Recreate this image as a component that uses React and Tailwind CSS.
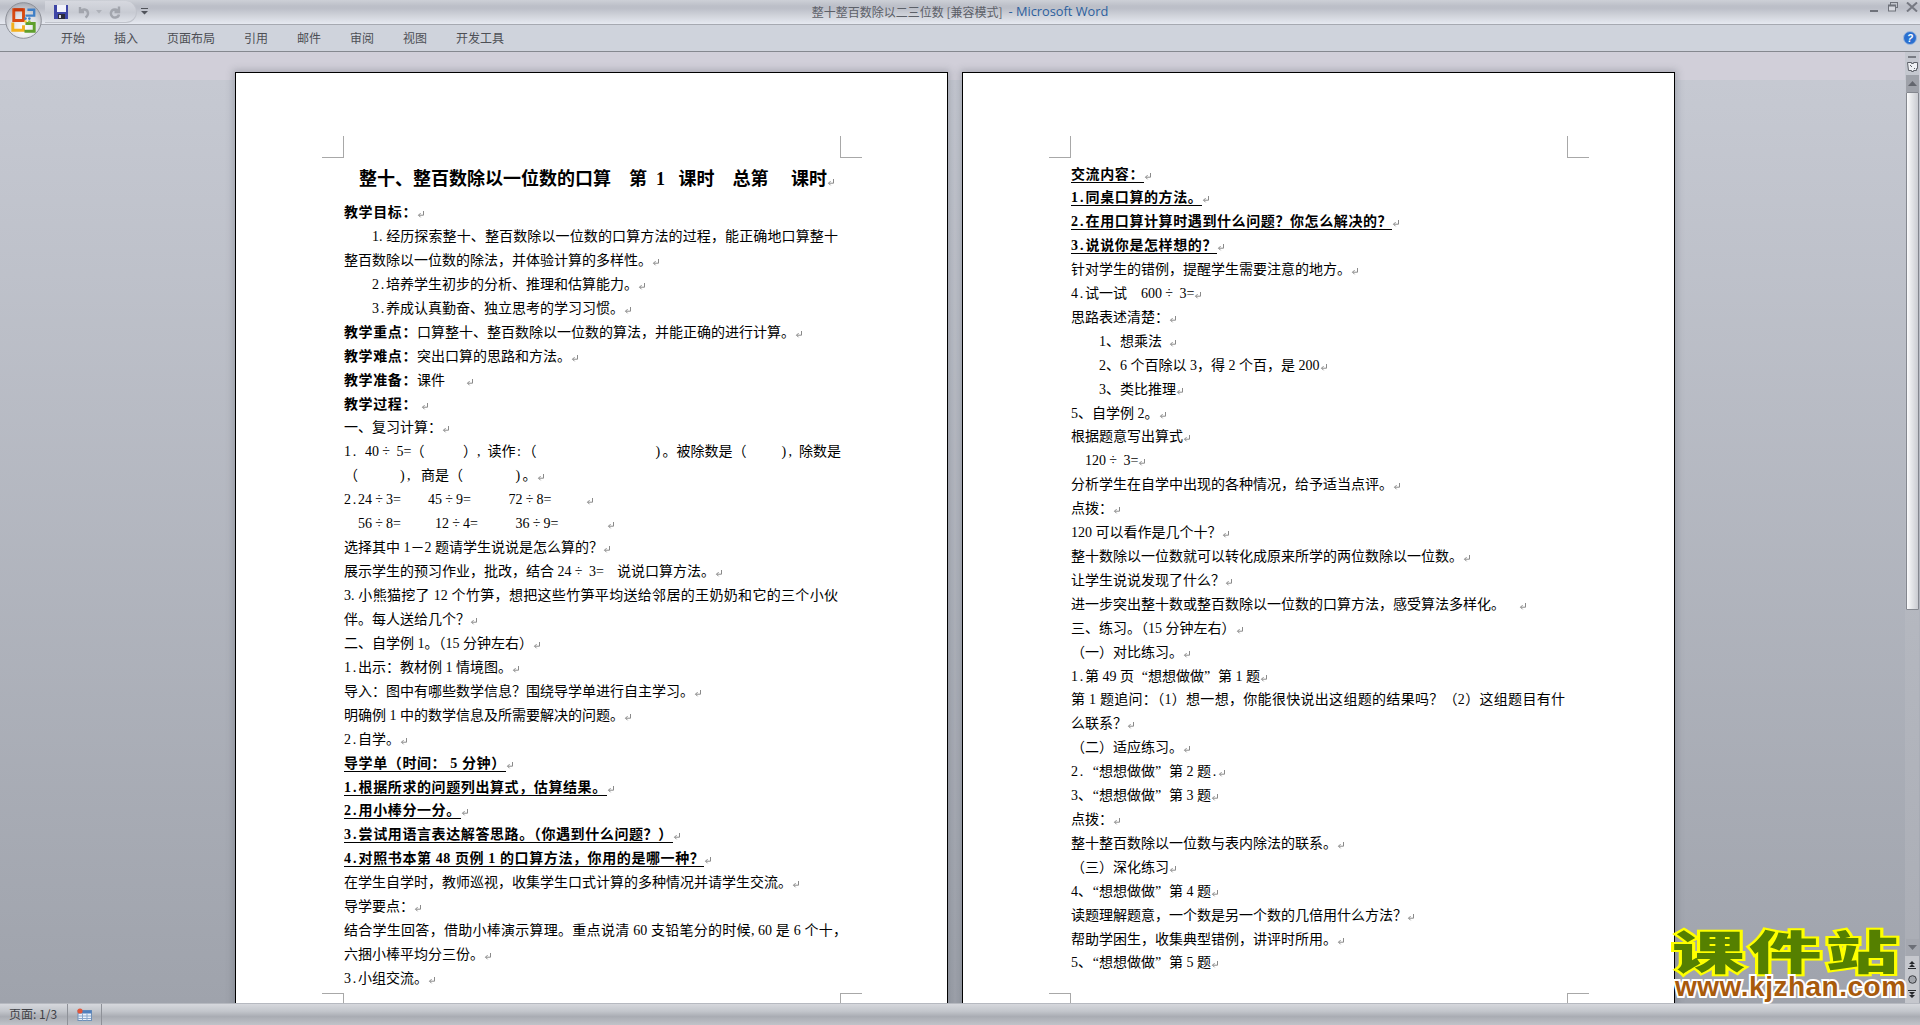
import React from "react";

const WID = {
  ".": "inline-block w-[7px] text-center",
  ",": "inline-block w-[7px] text-left",
  ":": "inline-block w-[7px] text-center",
  "(": "inline-block w-[7px] text-right",
  ")": "inline-block w-[7px] text-left",
  "=": "inline-block w-[7px] text-center",
  "÷": "inline-block w-[14px] text-center",
  "“": "inline-block w-[14px] text-right",
  "”": "inline-block w-[14px] text-left",
  "~": "inline-block w-[7px]",
  "`": "inline-block -ml-[7px]",
};

function T({ s }) {
  return s.split(/([.,:()=÷“”~`])/).map((p, i) =>
    WID[p] ? (
      <span key={i} className={WID[p]}>
        {p === "~" ? "\u00a0" : p === "`" ? "" : p}
      </span>
    ) : (
      p
    )
  );
}

function Mark() {
  return (
    <svg viewBox="0 0 8 8" className="inline-block w-[8px] h-[8px] align-[-1px]">
      <path d="M6.5 1v4.2H1.5M3.6 3.1L1.5 5.2l2.1 2.1" fill="none" stroke="#8a8a8a" strokeWidth="1" />
    </svg>
  );
}

function L({ t, lead, b, u, x = "", tail = "", nomark }) {
  const inner = (
    <>
      {lead && (
        <span className="font-bold tracking-[0.6px]">
          <T s={lead} />
        </span>
      )}
      <T s={t} />
    </>
  );
  return (
    <div className={`whitespace-pre-wrap ${b ? "font-bold tracking-[0.6px]" : ""} ${x}`}>
      {u ? <span className="border-b border-black">{inner}</span> : inner}
      <T s={tail} />
      {!nomark && <Mark />}
    </div>
  );
}

const J = "w-[494px] [text-align-last:justify]";
const J2 = "w-[503px] [text-align-last:justify]";

const page1 = [
  { lead: "教学目标：", t: "" },
  { t: "~~~~1.经历探索整十、整百数除以一位数的口算方法的过程，能正确地口算整十", x: J, nomark: true },
  { t: "整百数除以一位数的除法，并体验计算的多样性。" },
  { t: "~~~~2.培养学生初步的分析、推理和估算能力。" },
  { t: "~~~~3.养成认真勤奋、独立思考的学习习惯。" },
  { lead: "教学重点：", t: "口算整十、整百数除以一位数的算法，并能正确的进行计算。" },
  { lead: "教学难点：", t: "突出口算的思路和方法。" },
  { lead: "教学准备：", t: "课件~~~" },
  { lead: "教学过程：", t: "", tail: " " },
  { t: "一、复习计算：" },
  { t: "1.~40÷ 5=（~~~~~ ）, 读作:（~~~~~~~~~~~~~~~~~)。被除数是（~~~~~), 除数是", nomark: true },
  { t: "（~~~~~~),~商是（~~~~~~~ )。" },
  { t: "2.24÷3=~~~~45÷9=~~~~~ 72÷8=~~~~~" },
  { t: "~~56÷8=~~~~~12÷4=~~~~~ 36÷9=~~~~~~~" },
  { t: "选择其中 1－2 题请学生说说是怎么算的？" },
  { t: "展示学生的预习作业，批改，结合 24÷ 3=~~说说口算方法。" },
  { t: "3.小熊猫挖了 12 个竹笋，想把这些竹笋平均送给邻居的王奶奶和它的三个小伙", x: J, nomark: true },
  { t: "伴。每人送给几个？" },
  { t: "二、自学例 1。（15 分钟左右）" },
  { t: "1.出示：教材例 1 情境图。" },
  { t: "导入：图中有哪些数学信息？围绕导学单进行自主学习。" },
  { t: "明确例 1 中的数学信息及所需要解决的问题。" },
  { t: "2.自学。" },
  { t: "导学单（时间： 5 分钟）", b: 1, u: 1 },
  { t: "1.根据所求的问题列出算式，估算结果。", b: 1, u: 1 },
  { t: "2.用小棒分一分。", b: 1, u: 1 },
  { t: "3.尝试用语言表达解答思路。（你遇到什么问题？）", b: 1, u: 1 },
  { t: "4.对照书本第 48 页例 1 的口算方法，你用的是哪一种？", b: 1, u: 1 },
  { t: "在学生自学时，教师巡视，收集学生口式计算的多种情况并请学生交流。" },
  { t: "导学要点：" },
  { t: "结合学生回答，借助小棒演示算理。重点说清 60 支铅笔分的时候,60 是 6 个十，", x: J2, nomark: true },
  { t: "六捆小棒平均分三份。" },
  { t: "3.小组交流。" },
];

const page2 = [
  { t: "交流内容：", b: 1, u: 1 },
  { t: "1.同桌口算的方法。", b: 1, u: 1 },
  { t: "2.在用口算计算时遇到什么问题？你怎么解决的？", b: 1, u: 1 },
  { t: "3.说说你是怎样想的？", b: 1, u: 1 },
  { t: "针对学生的错例，提醒学生需要注意的地方。" },
  { t: "4.试一试~~600÷ 3=" },
  { t: "思路表述清楚：" },
  { t: "~~~~1、想乘法~" },
  { t: "~~~~2、6 个百除以 3，得 2 个百，是 200" },
  { t: "~~~~3、类比推理" },
  { t: "5、自学例 2。" },
  { t: "根据题意写出算式" },
  { t: "~~120÷ 3=" },
  { t: "分析学生在自学中出现的各种情况，给予适当点评。" },
  { t: "点拨：" },
  { t: "120 可以看作是几个十？" },
  { t: "整十数除以一位数就可以转化成原来所学的两位数除以一位数。" },
  { t: "让学生说说发现了什么？" },
  { t: "进一步突出整十数或整百数除以一位数的口算方法，感受算法多样化。~~" },
  { t: "三、练习。（15 分钟左右）" },
  { t: "（一）对比练习。" },
  { t: "1.第 49 页“想想做做”第 1 题" },
  { t: "第 1 题追问：（1）想一想，你能很快说出这组题的结果吗？（2）这组题目有什", x: J, nomark: true },
  { t: "么联系？" },
  { t: "（二）适应练习。" },
  { t: "2.“想想做做”第 2 题." },
  { t: "3、`“想想做做”第 3 题" },
  { t: "点拨：" },
  { t: "整十整百数除以一位数与表内除法的联系。" },
  { t: "（三）深化练习" },
  { t: "4、`“想想做做”第 4 题" },
  { t: "读题理解题意，一个数是另一个数的几倍用什么方法？" },
  { t: "帮助学困生，收集典型错例，讲评时所用。" },
  { t: "5、`“想想做做”第 5 题" },
];

function CropMarks() {
  return (
    <>
      <div className="absolute left-[86px] top-[63px] w-[22px] h-[22px] border-r border-b border-[#a8a8a8]" />
      <div className="absolute left-[604px] top-[63px] w-[22px] h-[22px] border-l border-b border-[#a8a8a8]" />
      <div className="absolute left-[86px] top-[920px] w-[22px] h-[22px] border-r border-t border-[#a8a8a8]" />
      <div className="absolute left-[604px] top-[920px] w-[22px] h-[22px] border-l border-t border-[#a8a8a8]" />
    </>
  );
}

function OfficeButton() {
  return (
    <svg viewBox="0 0 38 38" className="absolute left-[5px] top-[2px] w-[37px] h-[37px]">
      <defs>
        <radialGradient id="orb" cx="0.5" cy="0.72" r="0.7">
          <stop offset="0" stopColor="#ffffff" />
          <stop offset="0.55" stopColor="#dfe1e6" />
          <stop offset="1" stopColor="#a9acb4" />
        </radialGradient>
      </defs>
      <circle cx="19" cy="19" r="18.3" fill="url(#orb)" stroke="#8c8f97" strokeWidth="1" />
      <path d="M9 8h10v11H9z" fill="none" stroke="#d84a12" strokeWidth="3" />
      <path d="M9 8h10" fill="none" stroke="#c8380a" strokeWidth="3" />
      <path d="M21 14h9v-6h-7" fill="none" stroke="#3f7fc6" strokeWidth="2.4" />
      <path d="M8 21v8h11v-5" fill="none" stroke="#f3b01c" strokeWidth="3" />
      <path d="M21 22h9v8H20" fill="none" stroke="#5f9f2c" strokeWidth="3" />
      <circle cx="21" cy="17" r="1.4" fill="#3f7fc6" />
      <circle cx="25" cy="17" r="1.4" fill="#3f7fc6" />
      <circle cx="21" cy="20" r="1.3" fill="#f3c832" />
      <circle cx="25" cy="20" r="1.3" fill="#8bbf3a" />
    </svg>
  );
}

function QuickAccess() {
  return (
    <div className="ml-[45px] h-[22px] w-[92px] mt-[1px] rounded-r-[11px] border-r border-b border-[#c0c3cb] bg-[linear-gradient(#d6d8df,#c8cbd3_55%,#dfe2e9)] flex items-center pl-[9px] relative">
      <svg viewBox="0 0 14 14" className="w-[14px] h-[14px]">
        <rect x="0" y="0" width="14" height="14" fill="#3d45a6" />
        <rect x="3" y="0" width="9" height="7" fill="#f2f3fb" />
        <rect x="4" y="9" width="7" height="5" fill="#2b2b3a" />
        <rect x="5" y="10" width="2" height="3" fill="#d8d8e0" />
      </svg>
      <svg viewBox="0 0 14 14" className="ml-[9px] w-[14px] h-[14px]">
        <path d="M3 2v5h4M3.500 7C5 3.500 10.500 3.500 11 8c.2 2-1 3.500-2.500 4.500" fill="none" stroke="#a2a5ad" strokeWidth="2.400" />
      </svg>
      <svg viewBox="0 0 6 4" className="ml-[5px] w-[6px] h-[4px]">
        <path d="M0 0h6L3 3.500z" fill="#aeb1b9" />
      </svg>
      <svg viewBox="0 0 14 14" className="ml-[6px] w-[14px] h-[14px]">
        <path d="M11 1.500v5.500H6.500M10.500 7C9.500 3.500 4 3.500 3 7.500 2.400 10.500 5 13 7.500 12.500 9.500 12.200 10.800 11 11 9.500" fill="none" stroke="#a2a5ad" strokeWidth="2.400" />
      </svg>
      <svg viewBox="0 0 7 7" className="absolute left-[96px] top-[7px] w-[7px] h-[7px]">
        <path d="M0 0h7v1H0zM0 3h7L3.500 6.500z" fill="#50535a" />
      </svg>
    </div>
  );
}

function WindowButtons() {
  return (
    <div className="flex items-center gap-[8px] pr-[2px] mb-[2px]">
      <div className="w-[8px] h-[2px] mt-[7px] bg-[#6f727a]" />
      <svg viewBox="0 0 10 10" className="w-[10px] h-[10px] ml-[2px]">
        <rect x="2.500" y="0.500" width="7" height="5" fill="none" stroke="#6f727a" />
        <rect x="0.500" y="3" width="7" height="6" fill="#d5d7de" stroke="#6f727a" />
        <rect x="1" y="3" width="6" height="1.500" fill="#6f727a" />
      </svg>
      <svg viewBox="0 0 12 10" className="w-[12px] h-[10px]">
        <path d="M1 .5l10 9M11 .5l-10 9" stroke="#767982" strokeWidth="2" fill="none" />
      </svg>
    </div>
  );
}

function Scrollbar() {
  return (
    <div className="w-[14px] mr-[1px] flex flex-col items-center bg-[linear-gradient(#c5c8d0,#a9acb4)] shrink-0">
      <div className="h-[3.5px]" />
      <div className="w-[8px] h-[2px] bg-[#787b83] mb-[3px]" />
      <svg viewBox="0 0 11 12" className="w-[11px] h-[12px]">
        <path d="M.5 1.500h4v1h2v-1h4v6h-1v2h-3v1h-2v-1h-3z" fill="#eef0f4" stroke="#5f626a" />
        <path d="M3 4l2 2M7 7l1 1" stroke="#5f626a" />
      </svg>
      <div className="mt-[2px] w-[13px] h-[17px] bg-[#9fa2aa] flex items-center justify-center">
        <svg viewBox="0 0 9 5" className="w-[9px] h-[5px]">
          <path d="M0 5L4.500 0 9 5z" fill="#63666e" />
        </svg>
      </div>
      <div className="w-[13px] h-[518px] border border-[#84878f] rounded-[1px] bg-[linear-gradient(90deg,#fbfbfc,#e6e7ea_40%,#c9cbd1)]" />
      <div className="flex-1" />
      <div className="w-[13px] h-[17px] bg-[#a5a8b0] flex items-center justify-center">
        <svg viewBox="0 0 9 5" className="w-[9px] h-[5px]">
          <path d="M0 0L4.500 5 9 0z" fill="#6c6f77" />
        </svg>
      </div>
      <div className="w-[14px] h-[47px] bg-[#c5c7cd] flex flex-col items-center justify-around py-[2px]">
        <svg viewBox="0 0 8 8" className="w-[8px] h-[8px]">
          <path d="M4 0l3 3H1zM4 3l3 3H1zM0 7h8v1H0z" fill="#26282c" />
        </svg>
        <svg viewBox="0 0 9 9" className="w-[9px] h-[9px]">
          <circle cx="4.500" cy="4.500" r="3.800" fill="#a3a6ad" stroke="#3a3c41" />
        </svg>
        <svg viewBox="0 0 8 8" className="w-[8px] h-[8px]">
          <path d="M0 0h8v1H0zM1 2h6L4 5zM1 5h6L4 8z" fill="#26282c" />
        </svg>
      </div>
    </div>
  );
}

function Logo() {
  return (
    <div className="absolute left-[1668px] top-[921px] w-[236px] h-[84px] pointer-events-none">
      <div className="absolute left-[4px] top-[-4px] origin-left scale-x-[1.58] whitespace-pre font-['Noto_Sans_CJK_SC',sans-serif] font-black text-[46px] leading-[64px] tracking-[2.6px] text-[#558000] [-webkit-text-stroke:4px_#ffff00] [paint-order:stroke_fill]">
        课件站
      </div>
      <div className="absolute left-[7px] top-[51px] font-['Liberation_Sans',sans-serif] font-bold text-[28px] leading-[30px] whitespace-pre tracking-[0.5px] text-[#a85a0c] [-webkit-text-stroke:4px_#ffffff] [paint-order:stroke_fill]">
        www.kjzhan.com
      </div>
    </div>
  );
}

export default function App() {
  const doc = "font-['Liberation_Serif','Noto_Sans_CJK_SC',serif]";
  return (
    <div className="relative w-[1920px] h-[1025px] overflow-hidden flex flex-col font-['Noto_Sans_CJK_SC','Liberation_Sans',sans-serif]">
      {/* title bar */}
      <div className="h-[25px] shrink-0 flex items-start border-b border-[#a6a9b1] bg-[linear-gradient(#cdd0d7,#bcbfc8_25%,#bcbfc8_35%,#d0d3da_65%,#e6e9f1)]">
        <div className="flex-1 flex items-start">
          <QuickAccess />
        </div>
        <div className="h-[24px] flex items-center text-[12px] text-[#5c6068] whitespace-pre">
          <span>整十整百数除以二三位数 [兼容模式] </span>
          <span className="text-[#2c5f9e] font-['Open_Sans',sans-serif] text-[12.8px]"> - Microsoft Word</span>
        </div>
        <div className="flex-1 flex justify-end pt-[2px]">
          <WindowButtons />
        </div>
      </div>

      {/* ribbon tabs */}
      <div className="h-[27px] shrink-0 flex items-center justify-between border-b border-[#85888f] bg-[#cfd3dc]">
        <div className="flex pl-[61px] gap-[29px] text-[12px] text-[#4d4f55]">
          <span>开始</span>
          <span>插入</span>
          <span>页面布局</span>
          <span>引用</span>
          <span>邮件</span>
          <span>审阅</span>
          <span>视图</span>
          <span>开发工具</span>
        </div>
        <svg viewBox="0 0 14 14" className="w-[14px] h-[14px] mr-[3px]">
          <circle cx="7" cy="7" r="6.500" fill="#2a6fd0" stroke="#9fb8dc" />
          <text x="7" y="11" textAnchor="middle" fontSize="10" fontWeight="700" fontStyle="italic" fill="#ffffff" fontFamily="Liberation Sans">?</text>
        </svg>
      </div>

      {/* document area */}
      <div className="flex-1 min-h-0 flex bg-[linear-gradient(#d1cfd9_0,#d1cfd9_28px,#c6c9d2_28px,#9fa3ac_100%)]">
        <div className={`flex-1 overflow-hidden flex items-start gap-[14px] pl-[235px] pt-[20px] ${doc}`}>
          <div className="relative w-[713px] h-[1040px] shrink-0 bg-white border border-black shadow-[0_0_7px_2px_rgba(70,74,85,0.28)] pl-[108px] pt-[91px] text-[14px] leading-[23.94px] text-black">
            <CropMarks />
            <div className="pl-[15px] mb-[7px] whitespace-pre font-bold text-[18px] leading-[30px]">
              整十、整百数除以一位数的口算    第  1   课时    总第     课时<Mark />
            </div>
            <div className="w-[580px]">
              {page1.map((l, i) => (
                <L key={i} {...l} />
              ))}
            </div>
          </div>
          <div className="relative w-[713px] h-[1040px] shrink-0 bg-white border border-black shadow-[0_0_7px_2px_rgba(70,74,85,0.28)] pl-[108px] pt-[89.5px] text-[14px] leading-[23.9px] text-black">
            <CropMarks />
            <div className="w-[580px]">
              {page2.map((l, i) => (
                <L key={i} {...l} />
              ))}
            </div>
          </div>
        </div>
        <Scrollbar />
      </div>

      {/* status bar */}
      <div className="h-[22px] shrink-0 flex items-center border-t border-[#b6b9c0] bg-[linear-gradient(#d6d8dd,#c2c5cb_35%,#a9acb3_60%,#c0c3c9)]">
        <div className="w-[68px] pl-[9px] text-[12px] leading-[20px] text-[#3f4146] border-r border-[#8e9198] h-full">页面: 1/3</div>
        <div className="w-[34px] h-full border-r border-[#8e9198] flex items-center justify-center">
          <svg viewBox="0 0 15 13" className="w-[15px] h-[13px]">
            <rect x="1" y="2.500" width="13.500" height="10" fill="#eaf1fb" stroke="#6f90b8" />
            <rect x="1" y="2.500" width="13.500" height="3" fill="#4f7fbd" />
            <path d="M1 8h13M1 10.500h13M5.500 5.500v7M10 5.500v7" stroke="#8aa7cc" strokeWidth="1" />
            <circle cx="3" cy="3" r="2.600" fill="#e2563a" />
          </svg>
        </div>
      </div>

      <OfficeButton />
      <Logo />
    </div>
  );
}
